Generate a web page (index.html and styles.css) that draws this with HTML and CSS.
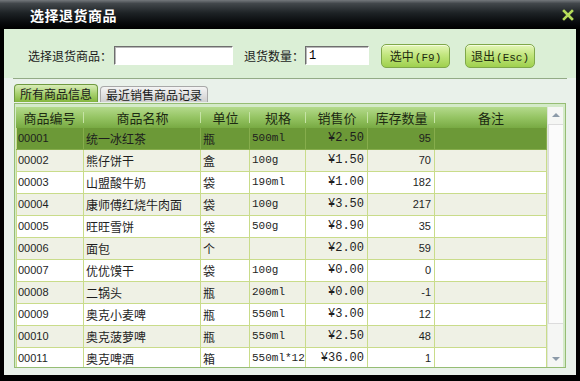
FILE: index.html
```html
<!DOCTYPE html>
<html lang="zh-CN">
<head>
  <meta charset="UTF-8" />
  <title>选择退货商品</title>
  <link rel="stylesheet" href="styles.css">
</head>
<body>

  <div class="window">
    <div class="titlebar">
      <span class="title">选择退货商品</span>
      <svg class="close" width="12" height="12" viewBox="0 0 12 12">
        <path d="M2 2 L10 10 M10 2 L2 10" stroke="#b6dc5a" stroke-width="2.6" stroke-linecap="square"/>
      </svg>
    </div>

    <div class="main">
      <div class="toolbar">
        <label>选择退货商品：</label>
        <input class="field field-name" type="text" value="">
        <label class="qty-label">退货数量：</label>
        <input class="field field-qty" type="text" value="1">
        <button class="btn btn-ok">选中<span class="key">(F9)</span></button>
        <button class="btn btn-exit">退出<span class="key">(Esc)</span></button>
      </div>
      <div class="sep"></div>

      <div class="lower">
        <div class="tabs">
          <div class="tab active">所有商品信息</div>
          <div class="tab">最近销售商品记录</div>
        </div>

        <div class="frame">
          <div class="grid">
            <div class="table">
              <div class="row head">
                <div>商品编号</div><div>商品名称</div><div>单位</div><div>规格</div><div>销售价</div><div>库存数量</div><div>备注</div>
              </div>
              <div class="rows" id="rows"></div>
            </div>
            <div class="scrollbar">
              <div class="sb-btn"><span class="arrow up"></span></div>
              <div class="sb-track"><div class="sb-thumb"></div></div>
              <div class="sb-btn"><span class="arrow down"></span></div>
            </div>
          </div>
        </div>
      </div>
    </div>
  </div>

  <script>
    const goods = [
      ['00001', '统一冰红茶', '瓶', '500ml', '2.50', '95'],
      ['00002', '熊仔饼干', '盒', '100g', '1.50', '70'],
      ['00003', '山盟酸牛奶', '袋', '190ml', '1.00', '182'],
      ['00004', '康师傅红烧牛肉面', '袋', '100g', '3.50', '217'],
      ['00005', '旺旺雪饼', '袋', '500g', '8.90', '35'],
      ['00006', '面包', '个', '', '2.00', '59'],
      ['00007', '优优馍干', '袋', '100g', '0.00', '0'],
      ['00008', '二锅头', '瓶', '200ml', '0.00', '-1'],
      ['00009', '奥克小麦啤', '瓶', '550ml', '3.00', '12'],
      ['00010', '奥克菠萝啤', '瓶', '550ml', '2.50', '48'],
      ['00011', '奥克啤酒', '箱', '550ml*12', '36.00', '1']
    ];

    const rows = document.getElementById('rows');

    goods.forEach((g, i) => {
      const row = document.createElement('div');
      row.className = 'row' + (i === 0 ? ' selected' : (i % 2 ? ' alt' : ''));
      row.innerHTML =
        '<div class="num">' + g[0] + '</div>' +
        '<div>' + g[1] + '</div>' +
        '<div>' + g[2] + '</div>' +
        '<div class="mono">' + g[3] + '</div>' +
        '<div class="mono price right">¥' + g[4] + '</div>' +
        '<div class="num right">' + g[5] + '</div>' +
        '<div></div>';
      rows.appendChild(row);
    });
  </script>

</body>
</html>
```

FILE: styles.css
```css
* {
  margin: 0;
  padding: 0;
  box-sizing: border-box;
}

body {
  font-family: 'Noto Sans CJK SC', sans-serif;
  background-color: #000;
  color: #1e1e1e;
  overflow: hidden;
}

.window {
  width: 580px;
  height: 381px;
  background: #000;
  display: flex;
  flex-direction: column;
}

.titlebar {
  height: 29px;
  flex-shrink: 0;
  display: flex;
  align-items: center;
  justify-content: space-between;
  padding: 0 6px 0 30px;
  background: linear-gradient(to bottom, #74787c 0%, #42474b 12%, #1d2225 45%, #07090b 80%, #000 100%);
}

.title {
  color: #fff;
  font-size: 14px;
  font-weight: bold;
  letter-spacing: 0.5px;
}

.close {
  margin-top: 1px;
}

.main {
  flex: 1;
  margin: 0 4px 6px 4px;
  display: flex;
  flex-direction: column;
  background: #e9f1ea;
}

.toolbar {
  height: 49px;
  flex-shrink: 0;
  display: flex;
  align-items: center;
  padding: 4px 0 0 24px;
  background: #dbefd6;
  font-size: 12px;
  color: #1a1a1a;
}

.field {
  height: 19px;
  border: 1px solid #fff;
  border-top-color: #6e6e6e;
  border-left-color: #6e6e6e;
  box-shadow: inset 1px 1px 0 #b8b8b8;
  background: #fff;
  font-family: 'Liberation Mono', monospace;
  font-size: 12px;
  padding: 0 3px;
  outline: none;
}

.field-name {
  width: 119px;
  margin-left: 2px;
}

.qty-label {
  margin-left: 11px;
}

.field-qty {
  width: 64px;
  margin-left: 1px;
}

.btn {
  height: 24px;
  border: 1px solid #7fa84a;
  border-radius: 5px;
  background: linear-gradient(to bottom, #e4f6b8 0%, #c2e67e 45%, #9fd04e 100%);
  box-shadow: inset 0 1px 0 #f4fbe0;
  font-family: 'Noto Sans CJK SC', sans-serif;
  font-size: 12px;
  color: #1e2a10;
  cursor: pointer;
}

.btn .key {
  font-family: 'Liberation Mono', monospace;
  font-size: 11px;
  margin-left: 1px;
}

.btn-ok {
  width: 69px;
  margin-left: 12px;
}

.btn-exit {
  width: 70px;
  margin-left: 15px;
}

.sep {
  height: 1px;
  flex-shrink: 0;
  margin: 0 9px;
  background: #93ab86;
}

.lower {
  flex: 1;
  padding: 5px 10px 0 10px;
  display: flex;
  flex-direction: column;
}

.tabs {
  display: flex;
  align-items: flex-end;
  gap: 2px;
  height: 18px;
}

.tab {
  height: 16px;
  padding: 0 5px;
  border: 1px solid #a8a8a8;
  border-bottom: none;
  border-radius: 4px 4px 0 0;
  background: linear-gradient(to bottom, #f4f4f4, #cfcfcf);
  font-size: 12px;
  line-height: 15px;
  color: #1a1a1a;
}

.tab.active {
  height: 18px;
  line-height: 17px;
  border-color: #6f9a40;
  background: linear-gradient(to bottom, #d8ecb8 0%, #a9d270 50%, #84b63e 100%);
}

.frame {
  margin-top: 1px;
  width: 552px;
  height: 265px;
  border: 1px solid #96bd74;
  padding: 3px 1px 0 1px;
  background: #d4eac9;
}

.grid {
  display: flex;
  height: 260px;
  overflow: hidden;
}

.table {
  width: 531px;
  height: 100%;
  overflow: hidden;
  background: #fff;
}

.row {
  display: grid;
  grid-template-columns: 68px 117px 49px 56px 62px 67px 112px;
  height: 22px;
  border-bottom: 1px solid #c9dc8a;
  font-size: 12px;
  line-height: 21px;
  background: #fff;
}

.row > div {
  border-right: 1px solid #c9dc8a;
  padding: 0 2px;
  white-space: nowrap;
  overflow: hidden;
}

.row > div:first-child {
  border-left: 1px solid #c9dc8a;
  padding-left: 1px;
}

.row.alt {
  background: #eff1e5;
}

.row.selected {
  background: #6c9937;
  border-bottom-color: #86ad4c;
}

.row.selected > div {
  border-right-color: #86ad4c;
}

.row.head {
  height: 21px;
  border-bottom: none;
  background: linear-gradient(to bottom, #b4da8c 0%, #95c463 50%, #78aa43 100%);
  font-size: 13px;
  line-height: 21px;
  color: #1c2a12;
}

.row.head > div {
  text-align: center;
  border: none;
  background: linear-gradient(#c6e3a6, #c6e3a6) right center / 1px 11px no-repeat;
}

.row.head > div:last-child {
  background: none;
}

.num {
  font-family: 'Liberation Sans', sans-serif;
  font-size: 11px;
}

.mono {
  font-family: 'Liberation Mono', monospace;
  font-size: 11px;
}

.mono.price {
  font-size: 12px;
}

.right {
  text-align: right;
}

.row > div.right {
  padding-right: 3px;
}

.scrollbar {
  width: 16px;
  height: 100%;
  display: flex;
  flex-direction: column;
  background: #f5f6f4;
  border-left: 1px solid #dfe6da;
}

.sb-btn {
  height: 16px;
  flex-shrink: 0;
  display: flex;
  align-items: center;
  justify-content: center;
}

.arrow {
  width: 0;
  height: 0;
  border-left: 4px solid transparent;
  border-right: 4px solid transparent;
}

.arrow.up {
  border-bottom: 4px solid #8c9aa8;
}

.arrow.down {
  border-top: 4px solid #8c9aa8;
}

.sb-track {
  flex: 1;
  padding: 1px 0 0 0;
}

.sb-thumb {
  height: 200px;
  border: 1px solid #dcdcdc;
  border-right: none;
  background: #fbfbfb;
}
```
